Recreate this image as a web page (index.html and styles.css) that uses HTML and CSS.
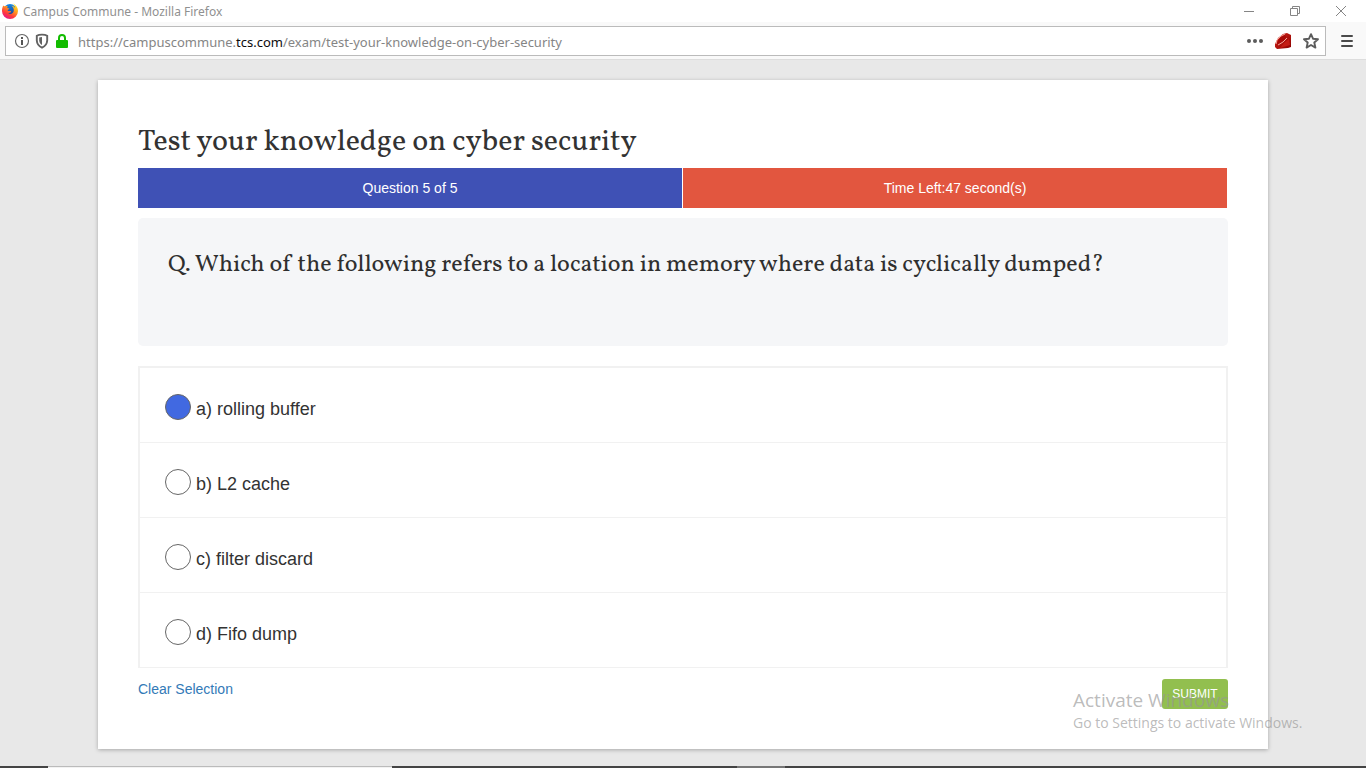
FILE: index.html
```
<!DOCTYPE html>
<html lang="en">
<head>
<meta charset="utf-8">
<title>Campus Commune</title>
<link rel="stylesheet" href="styles.css">
</head>
<body>
<header class="titlebar">
  <svg class="firefox" viewBox="0 0 16 16" aria-hidden="true">
    <defs>
      <linearGradient id="flame" x1="0.85" y1="0.1" x2="0.3" y2="1">
        <stop offset="0" stop-color="#ffe226"/><stop offset="0.35" stop-color="#ff9a1f"/>
        <stop offset="0.7" stop-color="#ff3b3b"/><stop offset="1" stop-color="#e3158a"/>
      </linearGradient>
      <linearGradient id="globe" x1="0.5" y1="0" x2="0.5" y2="1">
        <stop offset="0" stop-color="#1288e8"/><stop offset="1" stop-color="#24307c"/>
      </linearGradient>
    </defs>
    <circle cx="8" cy="7.6" r="6.6" fill="url(#globe)"/>
    <path fill="url(#flame)" d="M1.5 2.4C2 3 2.4 3.2 3 3.3 4 2.9 5 3 5.8 3.3 5.4 3.8 5.2 4.3 5.3 4.9L7.3 5.5C7.2 6.4 6 6.5 5.6 7.2 5.8 8.2 7 8 8 7.9 8.8 7.8 9.3 8.3 9 8.8 8.4 10 7 10.2 5.8 9.8 8 12.3 11.5 11 11.8 7.6 11.9 5.3 10.8 3.4 9.5 2.4 11.5 2.8 12.5 3.8 13 4.9 13 3 12 1.5 10.6.5 14 1.5 16 4.7 16 8A8 8 0 0 1 0 8C0 5.8.4 3.7 1.5 2.4Z"/>
  </svg>
  <span class="window-title">Campus Commune - Mozilla Firefox</span>
  <div class="window-controls">
    <button type="button" aria-label="Minimize"><svg viewBox="0 0 12 12"><path d="M1 6.5h10"/></svg></button>
    <button type="button" aria-label="Restore"><svg viewBox="0 0 12 12"><path d="M1.5 3.5h7v7h-7zM3.5 3.5v-2h7v7h-2"/></svg></button>
    <button type="button" aria-label="Close"><svg viewBox="0 0 12 12"><path d="M1 1l10 10M11 1L1 11"/></svg></button>
  </div>
</header>
<nav class="toolbar">
  <div class="address">
    <svg class="icon" viewBox="0 0 16 16" aria-hidden="true"><circle cx="8" cy="8" r="6.5" fill="none" stroke="#666" stroke-width="1.2"/><path fill="#555" d="M7 4h2v2H7zM7 7h2v5H7z"/></svg>
    <svg class="icon" viewBox="0 0 16 16" aria-hidden="true"><path d="M8 1.6C10 1.6 12 2 13.2 2.7V7.5C13 11 11 13.3 8 14.6 5 13.3 3 11 2.8 7.5V2.7C4 2 6 1.6 8 1.6Z" fill="none" stroke="#626262" stroke-width="1.9"/><path fill="#626262" d="M8 4C7 4 6 4.2 5.2 4.5V7.5C5.3 9.5 6.4 11 8 12Z"/></svg>
    <svg class="icon" viewBox="0 0 16 16" aria-hidden="true"><path d="M5 8V5a3 3 0 0 1 6 0v3" fill="none" stroke="#12bc00" stroke-width="2"/><rect x="2" y="7" width="12" height="8" rx="1" fill="#12bc00"/></svg>
    <span class="url">https://campuscommune.<b>tcs.com</b>/exam/test-your-knowledge-on-cyber-security</span>
    <div class="actions">
      <button type="button" aria-label="Page actions"><svg viewBox="0 0 16 16"><g fill="#5c5c5c"><circle cx="2" cy="8" r="2"/><circle cx="8" cy="8" r="2"/><circle cx="14" cy="8" r="2"/></g></svg></button>
      <button type="button" aria-label="Ruby">
        <svg viewBox="0 0 16 16">
          <defs>
            <linearGradient id="ruby" x1="0" y1="0" x2="1" y2="1"><stop offset="0" stop-color="#d8281c"/><stop offset="1" stop-color="#8c0000"/></linearGradient>
          </defs>
          <path fill="url(#ruby)" d="M0 11 3 5 8 1 12 0 16 2V14L13 15 2 16 0 14Z"/>
          <path fill="#a80a08" d="M3 8 6 4 10 2 11 4 9 7 5 10 2 11Z"/>
          <path d="M1 11 2 7 6 3 10 1M3 12 8 9 12 5" stroke="#f2a59c" stroke-width="1" fill="none"/>
          <path fill="#c41c14" d="M5 15 9 10 14 6 15 12Z"/>
        </svg>
      </button>
      <button type="button" aria-label="Bookmark"><svg viewBox="0 0 16 16"><path d="M8 1.2 10 5.7 15 6.2 11.3 9.5 12.4 14.6 8 12 3.6 14.6 4.7 9.5 1 6.2 6 5.7Z" fill="none" stroke="#5c5c5c" stroke-width="1.9" stroke-linejoin="round"/></svg></button>
    </div>
  </div>
  <button class="menu" type="button" aria-label="Menu"><svg viewBox="0 0 16 16"><path d="M3 3h10M3 8h10M3 13h10" stroke="#4a4a4a" stroke-width="2" stroke-linecap="round"/></svg></button>
</nav>
<main class="page">
  <form class="card">
    <h1>Test your knowledge on cyber security</h1>
    <div class="status">
      <div class="count">Question 5 of 5</div>
      <div class="timer">Time Left:47 second(s)</div>
    </div>
    <div class="question"><h2 id="question">Q. Which of the following refers to a location in memory where data is cyclically dumped?</h2></div>
    <div class="options" role="radiogroup" aria-labelledby="question">
      <label><input type="radio" name="answer" checked><span>a) rolling buffer</span></label>
      <label><input type="radio" name="answer"><span>b) L2 cache</span></label>
      <label><input type="radio" name="answer"><span>c) filter discard</span></label>
      <label><input type="radio" name="answer"><span>d) Fifo dump</span></label>
    </div>
    <div class="footer">
      <a href="#">Clear Selection</a>
      <button class="submit" type="button">SUBMIT</button>
    </div>
  </form>
</main>
<aside class="watermark">
  <p class="activate">Activate Windows</p>
  <p class="hint">Go to Settings to activate Windows.</p>
</aside>
<div class="taskbar"><span class="search"></span><span class="active"></span></div>
</body>
</html>
```
FILE: styles.css
```
* { box-sizing: border-box; }
body {
  margin: 0;
  min-height: 100vh;
  display: flex;
  flex-direction: column;
  background: #e8e8e8;
  color: #333;
  font-family: "Liberation Sans", Arial, sans-serif;
  font-size: 14px;
}
button { padding: 0; border: 0; background: none; }
svg { display: block; }
.titlebar {
  display: flex;
  align-items: center;
  height: 22px;
  padding: 0 19px 0 2px;
  background: #fff;
  color: #909090;
  font-family: "Noto Sans", sans-serif;
  font-size: 12px;
}
.firefox { width: 16px; height: 16px; margin-right: 5px; }
.window-controls { display: flex; gap: 34px; margin-left: auto; }
.window-controls svg { width: 12px; height: 12px; fill: none; stroke: #858585; }
.toolbar {
  display: flex;
  align-items: center;
  gap: 13px;
  height: 38px;
  padding: 1px 11px 0 5px;
  background: #f9f9f9;
  border-bottom: 1px solid #ddd;
}
.address {
  flex: 1;
  display: flex;
  align-items: center;
  gap: 4px;
  height: 30px;
  padding: 0 6px 0 8px;
  background: #fff;
  border: 1px solid #bbb;
}
.icon { width: 16px; height: 16px; }
.url { margin-left: 4px; padding-top: 1px; color: #858585; font: 13px "Noto Sans", sans-serif; }
.url b { color: #0c0c0d; font-weight: normal; }
.actions { display: flex; gap: 12px; margin-left: auto; }
.actions svg, .menu svg { width: 16px; height: 16px; }
.page { flex: 1; padding: 20px 98px 17px; }
.card {
  padding: 40px;
  background: #fff;
  box-shadow: 0 1px 4px rgba(0, 0, 0, .28);
}
h1, h2 {
  margin: 0;
  font-family: Vollkorn, "Liberation Serif", serif;
  font-weight: normal;
}
h1 { padding-top: 2px; font-size: 30px; line-height: 40px; margin-bottom: 6px; }
.status { display: flex; gap: 1px; padding-right: 1px; color: #fff; line-height: 40px; text-align: center; }
.count, .timer { flex: 1; }
.count { background: #3f51b5; }
.timer { background: #e2563f; }
.question { min-height: 128px; margin: 10px 0 20px; padding: 30px; background: #f5f6f8; border-radius: 5px; }
h2 { font-size: 24px; line-height: 34px; color: #2f2f2f; }
.options { border: 2px solid #f1f1f1; border-bottom-width: 0; }
.options label {
  display: flex;
  align-items: center;
  gap: 5px;
  height: 75px;
  padding: 4px 25px 0;
  border-bottom: 1px solid #f1f1f1;
  font-size: 18px;
}
.options span { padding-top: 5px; }
.options input {
  appearance: none;
  width: 26px;
  height: 26px;
  margin: 0;
  border: 1px solid #666;
  border-radius: 50%;
  background: #fff;
}
.options input:checked { background: #4169e1; }
.footer { display: flex; justify-content: space-between; align-items: flex-start; margin-top: 11px; }
.footer a { color: #337ab7; text-decoration: none; line-height: 20px; }
.submit {
  width: 66px;
  height: 30px;
  border-radius: 3px;
  background: #92bf4f;
  color: #fff;
  font: 12px "Liberation Sans", Arial, sans-serif;
}
.watermark {
  position: absolute;
  right: 57px;
  bottom: 35px;
  width: 236px;
  color: rgba(150, 150, 150, .65);
  font-family: "Open Sans", sans-serif;
  white-space: nowrap;
  pointer-events: none;
}
.watermark p { margin: 0; }
.activate { font-size: 19px; line-height: 24px; }
.hint { font-size: 14px; line-height: 21px; }
.taskbar { display: flex; height: 2px; background: #444; }
.search { width: 344px; margin-left: 48px; background: #f2f2f2; border-top: 1px solid #bbb; }
.active { width: 48px; margin-left: 345px; background: #777; }
```
